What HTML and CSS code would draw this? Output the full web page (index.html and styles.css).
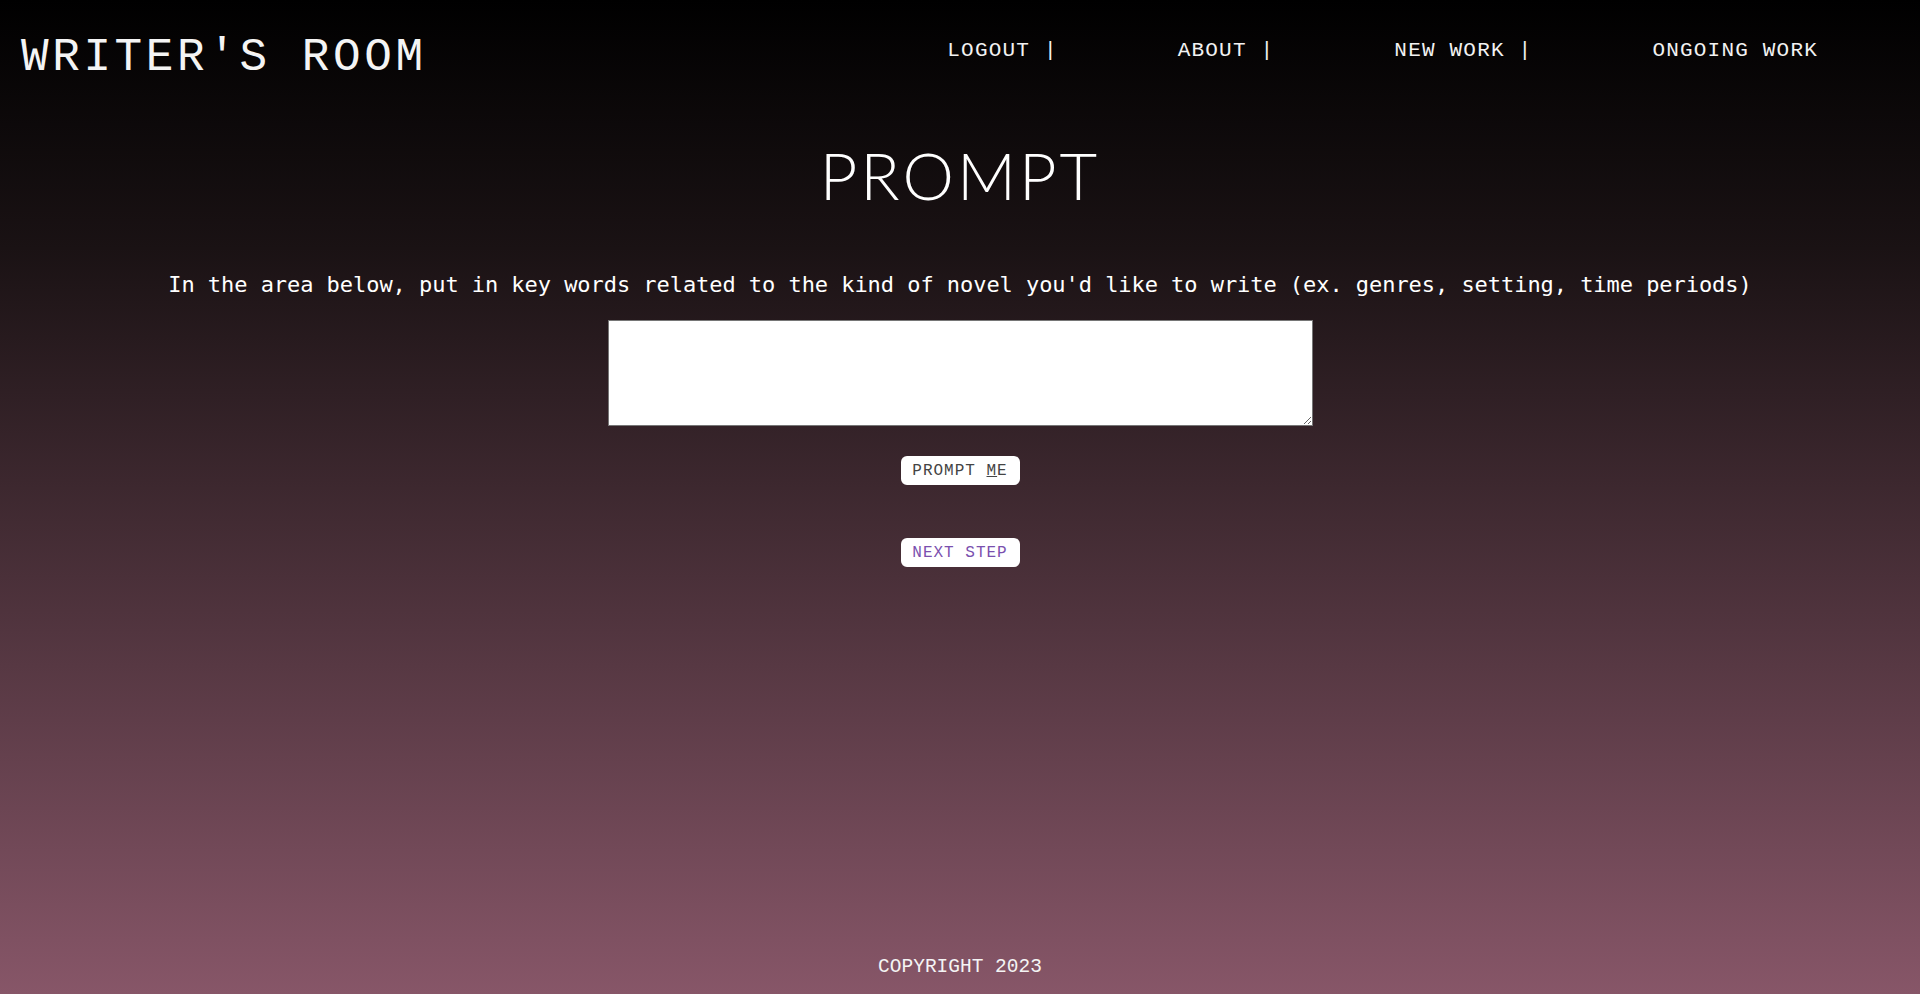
FILE: index.html
```html
<!DOCTYPE html>
<html lang="en">
<head>
<meta charset="utf-8">
<title>Writer's Room</title>
<link rel="stylesheet" href="styles.css">
</head>
<body>
<div class="page">
  <header class="header">
    <div class="logo">WRITER'S ROOM</div>
    <nav class="nav">
      <a class="nav-item" href="#">LOGOUT |</a>
      <a class="nav-item" href="#">ABOUT |</a>
      <a class="nav-item" href="#">NEW WORK |</a>
      <a class="nav-item" href="#">ONGOING WORK</a>
    </nav>
  </header>
  <main class="main">
    <h1 class="title">PROMPT</h1>
    <p class="desc">In the area below, put in key words related to the kind of novel you'd like to write (ex. genres, setting, time periods)</p>
    <textarea class="input"></textarea>
    <button class="btn btn-prompt">PROMPT <span class="u">M</span>E</button>
    <button class="btn btn-next">NEXT STEP</button>
  </main>
  <footer class="footer">COPYRIGHT 2023</footer>
</div>
</body>
</html>
```
FILE: styles.css
```css
html, body {
  margin: 0;
  padding: 0;
}
body {
  background: linear-gradient(180deg, #000000 0%, #1a1214 25%, #875668 100%);
  min-height: 100vh;
  color: #fff;
  font-family: "Liberation Mono", monospace;
}
.page {
  min-height: 100vh;
  display: flex;
  flex-direction: column;
}
.header {
  display: flex;
  justify-content: space-between;
  align-items: flex-start;
  padding: 33px 102px 0 21px;
}
.logo {
  font-family: "Liberation Mono", monospace;
  font-size: 46px;
  line-height: 51px;
  letter-spacing: 3.6px;
  white-space: nowrap;
  color: #f4f4f4;
}
.nav {
  display: flex;
  gap: 120px;
  margin-top: 6px;
}
.nav-item {
  color: #f2f2f2;
  text-decoration: none;
  font-size: 21px;
  line-height: 23px;
  letter-spacing: 1.2px;
  white-space: nowrap;
}
.main {
  flex: 1;
  display: flex;
  flex-direction: column;
  align-items: center;
}
.title {
  margin: 59px 0 0;
  font-family: "Lato", "Noto Sans", sans-serif;
  font-weight: 300;
  font-size: 65px;
  line-height: 65px;
  letter-spacing: 3px;
}
.desc {
  margin: 66px 0 0;
  font-family: "DejaVu Sans Mono", monospace;
  font-size: 22px;
  line-height: 22px;
  letter-spacing: -0.05px;
}
.input {
  margin-top: 24px;
  width: 705px;
  height: 106px;
  box-sizing: border-box;
  border: 1px solid #767676;
  background: #fff;
  padding: 2px;
}
.btn {
  width: 119px;
  height: 29px;
  box-sizing: border-box;
  background: #fff;
  border: none;
  border-radius: 6px;
  font-family: "Liberation Mono", monospace;
  font-size: 16px;
  letter-spacing: 1px;
  padding: 0;
}
.btn-prompt {
  margin-top: 30px;
  color: #444;
}
.btn-prompt .u {
  text-decoration: underline;
  text-underline-offset: 1px;
}
.btn-next {
  margin-top: 53px;
  color: #7a4fae;
}
.footer {
  text-align: center;
  font-size: 19.5px;
  line-height: 20px;
  color: #f4f4f4;
  padding-bottom: 17px;
}
```
